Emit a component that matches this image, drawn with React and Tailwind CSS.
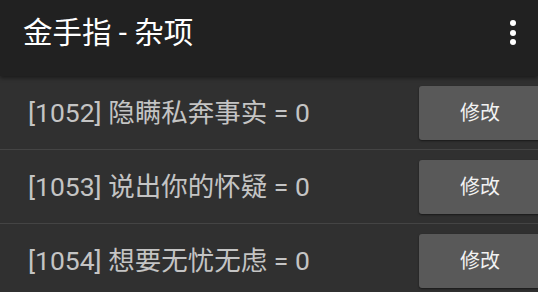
export default function App() {
  const rows = [
    { id: 1052, name: "隐瞒私奔事实", v: 0 },
    { id: 1053, name: "说出你的怀疑", v: 0 },
    { id: 1054, name: "想要无忧无虑", v: 0 },
  ];
  const font = { fontFamily: 'Roboto, "Noto Sans CJK SC", sans-serif' };
  return (
    <div className="w-[538px] h-[292px] overflow-hidden bg-[#303030] relative" style={font}>
      <div className="h-[76px] bg-[#212121] flex items-start justify-between pt-[13px] pl-[23px] pr-[22px] relative z-10 shadow-[0_2px_4px_rgba(0,0,0,0.45)]">
        <div className="text-white text-[29.5px] leading-[40px]">金手指 - 杂项</div>
        <div className="flex flex-col items-center gap-[3.5px] pt-[7px]">
          <span className="w-[6px] h-[6px] rounded-full bg-white" />
          <span className="w-[6px] h-[6px] rounded-full bg-white" />
          <span className="w-[6px] h-[6px] rounded-full bg-white" />
        </div>
      </div>
      <div className="flex flex-col">
        {rows.map((r) => (
          <div key={r.id} className="h-[74px] flex items-center border-b border-[#444444] pl-[28px]">
            <div className="flex-1 text-[#c4c4c4] text-[26.5px] leading-[32px] whitespace-nowrap">
              [{r.id}] {r.name} = {r.v}
            </div>
            <button className="w-[122px] h-[54px] -mr-[3px] rounded-[3px] bg-[#595959] text-[#f2f2f2] text-[20px] shadow-[0_1px_2px_rgba(0,0,0,0.5)]">
              修改
            </button>
          </div>
        ))}
      </div>
    </div>
  );
}
